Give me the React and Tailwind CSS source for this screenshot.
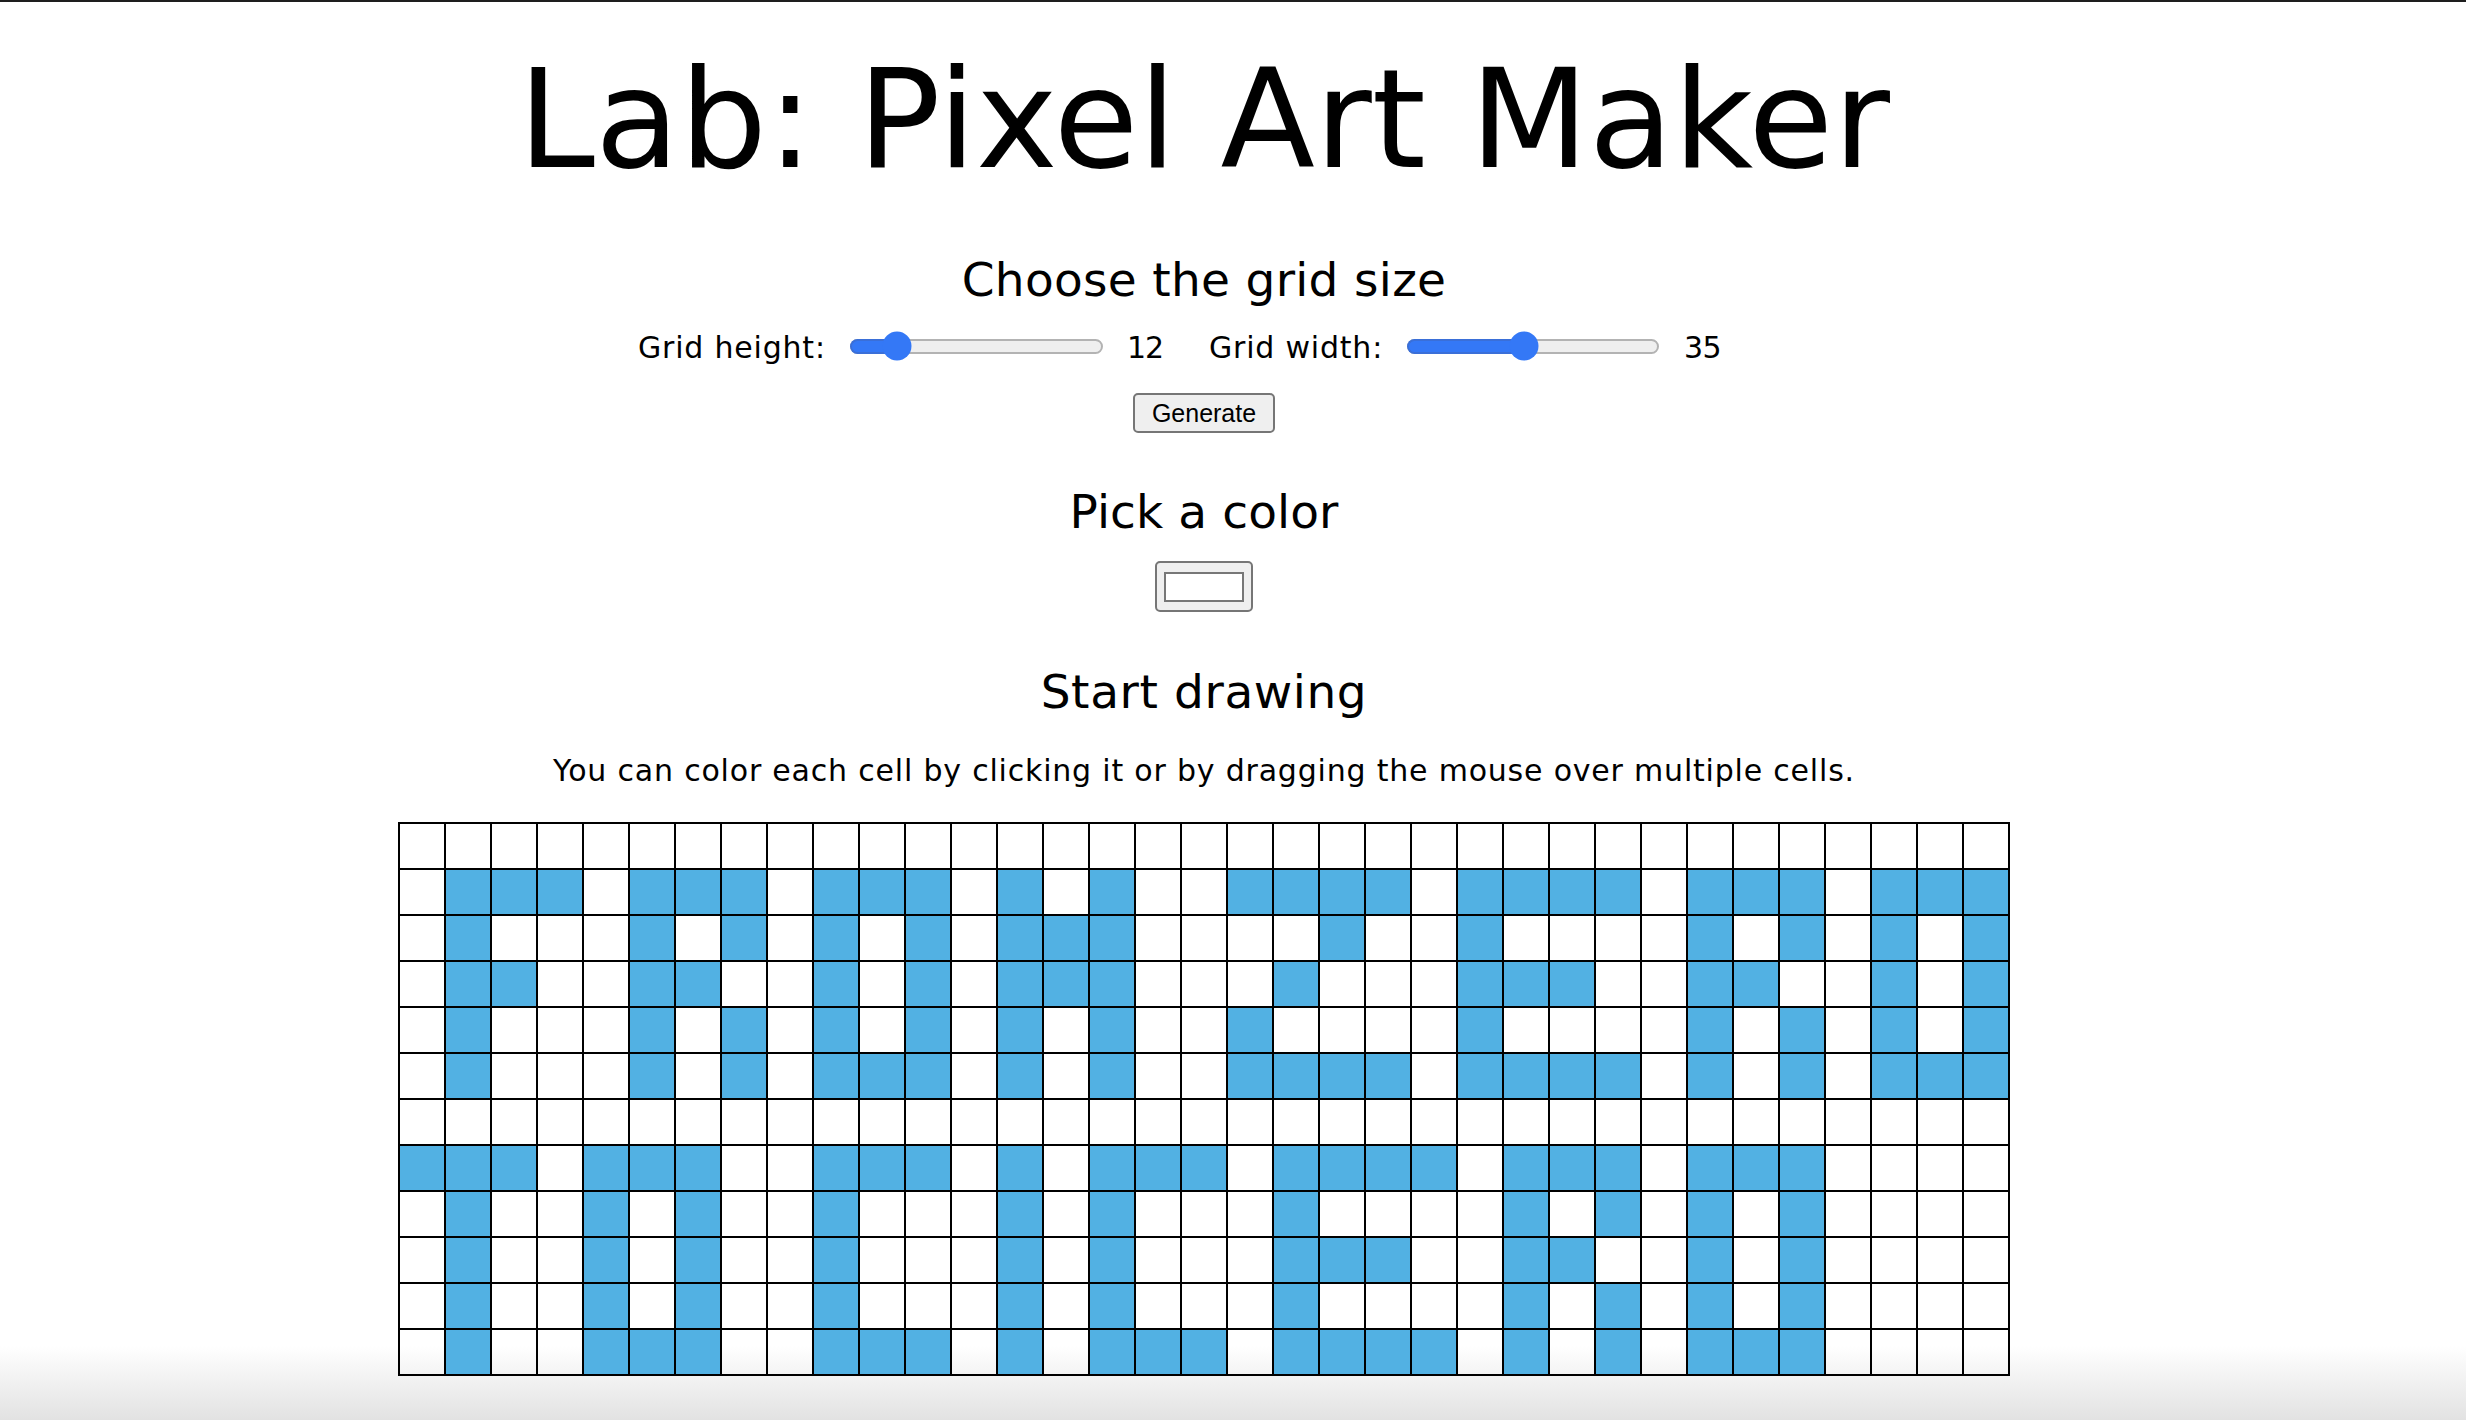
import React from "react";

const ROWS = [
  [],
  [1,2,3,5,6,7,9,10,11,13,15,18,19,20,21,23,24,25,26,28,29,30,32,33,34],
  [1,5,7,9,11,13,14,15,20,23,28,30,32,34],
  [1,2,5,6,9,11,13,14,15,19,23,24,25,28,29,32,34],
  [1,5,7,9,11,13,15,18,23,28,30,32,34],
  [1,5,7,9,10,11,13,15,18,19,20,21,23,24,25,26,28,30,32,33,34],
  [],
  [0,1,2,4,5,6,9,10,11,13,15,16,17,19,20,21,22,24,25,26,28,29,30],
  [1,4,6,9,13,15,19,24,26,28,30],
  [1,4,6,9,13,15,19,20,21,24,25,28,30],
  [1,4,6,9,13,15,19,24,26,28,30],
  [1,4,5,6,9,10,11,13,15,16,17,19,20,21,22,24,26,28,29,30],
];
const COLS = 35;

function Slider({ width, fraction }) {
  const pos = Math.round(width * fraction);
  return (
    <div
      className="relative h-[15px] shrink-0 rounded-full border-2 border-[#b3b3b3] bg-[#efefef]"
      style={{ width }}
    >
      <div
        className="absolute left-[-2px] top-[-2px] h-[15px] rounded-l-full border-2 border-r-0 border-[#3a6fd8] bg-[#3478f6]"
        style={{ width: pos }}
      />
      <div
        className="absolute top-1/2 h-[29px] w-[29px] -translate-x-1/2 -translate-y-1/2 rounded-full bg-[#3478f6]"
        style={{ left: pos - 2 }}
      />
    </div>
  );
}

function Grid() {
  return (
    <div className="mt-[36px] grid grid-cols-[repeat(35,46px)] border-l-2 border-t-2 border-black">
      {ROWS.map((row, r) =>
        Array.from({ length: COLS }, (_, c) => (
          <div
            key={`${r}-${c}`}
            className={
              row.includes(c)
                ? "h-[46px] border-b-2 border-r-2 border-black bg-[#52b1e3]"
                : "h-[46px] border-b-2 border-r-2 border-black"
            }
          />
        ))
      )}
    </div>
  );
}

export default function App() {
  return (
    <div className="h-[1420px] w-full overflow-hidden bg-[image:linear-gradient(180deg,#ffffff_0px,#ffffff_1346px,#e2e2e2_1420px)] font-['DejaVu_Sans',sans-serif] text-black">
      <div className="h-[2px] w-full bg-[#1e1e1e]" />
      <div className="flex w-[2408px] flex-col items-center">
        <h1 className="mt-[49px] whitespace-nowrap text-[138px] font-normal leading-[138px] tracking-[0px]">
          Lab: Pixel Art Maker
        </h1>

        <h2 className="mt-[67px] whitespace-nowrap text-[47px] font-normal leading-[47px] tracking-[0.3px]">
          Choose the grid size
        </h2>

        <div className="mt-[28px] flex h-[30px] items-center pr-[51px] text-[30px] leading-[33px] tracking-[0.8px]">
          <span className="w-[186px] shrink-0 whitespace-nowrap pt-[3px]">Grid height:</span>
          <div className="ml-[26px]">
            <Slider width={253} fraction={0.186} />
          </div>
          <span className="ml-[24px] w-[28px] shrink-0 whitespace-nowrap pt-[3px] tracking-[-1px]">12</span>
          <span className="ml-[54px] w-[175px] shrink-0 whitespace-nowrap pt-[3px]">Grid width:</span>
          <div className="ml-[23px]">
            <Slider width={252} fraction={0.464} />
          </div>
          <span className="ml-[25px] w-[35px] shrink-0 whitespace-nowrap pt-[3px] tracking-[-0.5px]">35</span>
        </div>

        <button className="mt-[32px] flex h-[40px] w-[142px] items-center justify-center rounded-[5px] border-2 border-[#767676] bg-[#efefef] font-['Liberation_Sans',Arial,sans-serif] text-[25px] leading-none text-black">
          Generate
        </button>

        <h2 className="mt-[55px] whitespace-nowrap text-[47px] font-normal leading-[47px] tracking-[0.1px]">
          Pick a color
        </h2>

        <div className="mt-[26px] flex h-[51px] w-[98px] items-center justify-center rounded-[5px] border-2 border-[#767676] bg-[#efefef]">
          <div className="h-[30px] w-[80px] border-2 border-[#777777] bg-white" />
        </div>

        <h2 className="mt-[56px] whitespace-nowrap text-[47px] font-normal leading-[47px] tracking-[0.6px]">
          Start drawing
        </h2>

        <p className="mt-[41px] whitespace-nowrap text-[30px] leading-[30px] tracking-[0.8px]">
          You can color each cell by clicking it or by dragging the mouse over multiple cells.
        </p>

        <Grid />
      </div>
    </div>
  );
}
